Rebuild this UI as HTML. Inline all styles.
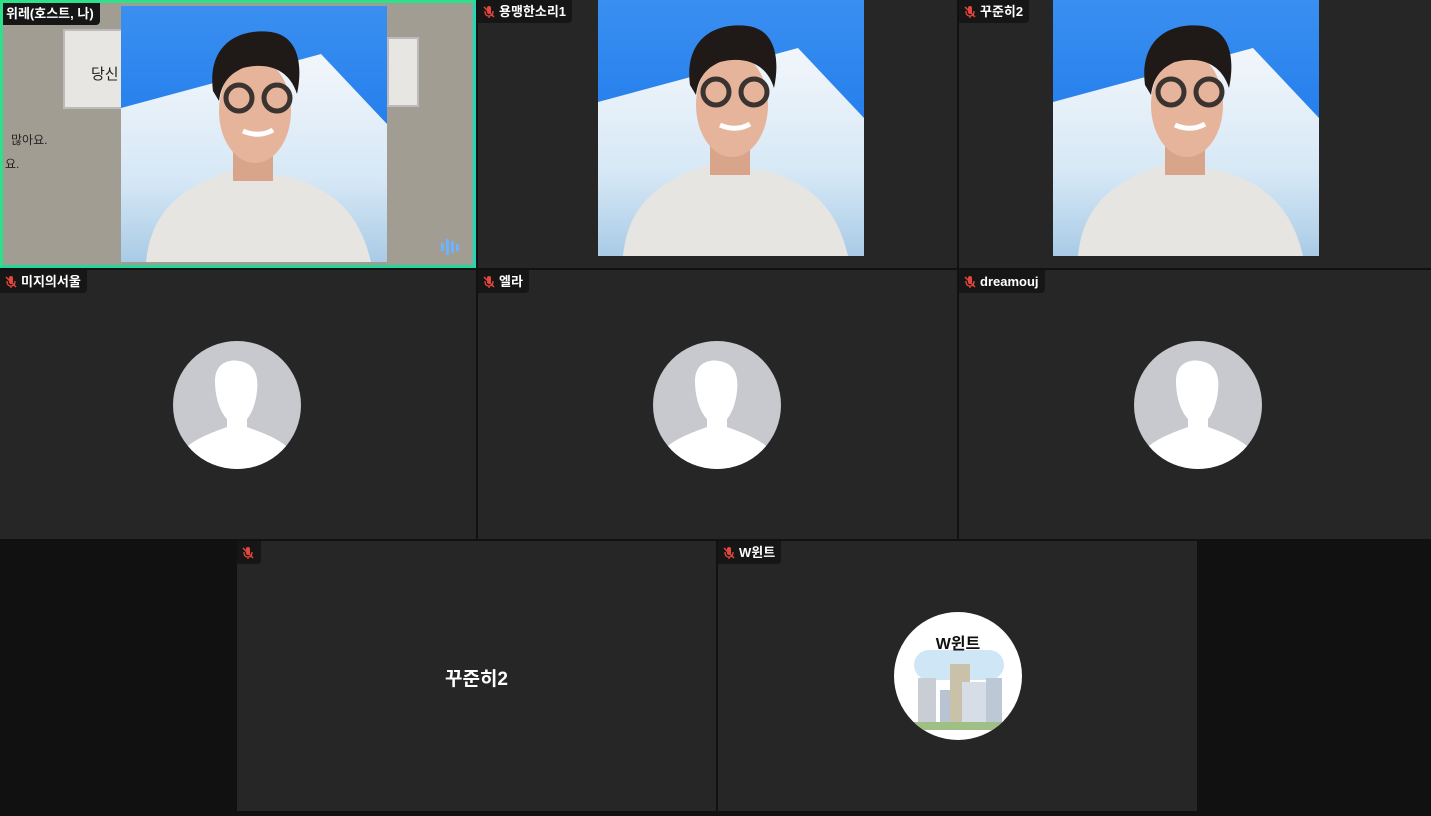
<!DOCTYPE html>
<html><head><meta charset="utf-8"><style>
*{margin:0;padding:0;box-sizing:border-box}
body{width:1431px;height:816px;background:#111;position:relative;overflow:hidden;font-family:"Liberation Sans","Noto Sans CJK KR",sans-serif}
.t{position:absolute;background:#262626;overflow:hidden}
.lbl{position:absolute;left:0;top:0;height:23px;background:#161616;color:#fff;font-size:13px;font-weight:bold;line-height:23px;padding:0 6px 0 4px;border-radius:0 0 4px 0;display:flex;align-items:center;gap:3px;z-index:3}
.mic{width:14px;height:14px}
.pic{position:absolute;width:266px;height:256px}
.av{position:absolute;width:128px;height:128px;border-radius:50%;background:#c7c9ce;overflow:hidden}
</style></head><body>
<svg width="0" height="0" style="position:absolute">
<defs>
<linearGradient id="bg" x1="0" y1="0" x2="0" y2="1"><stop offset="0" stop-color="#3a8ff0"/><stop offset="1" stop-color="#0d6de8"/></linearGradient>
<linearGradient id="wh" x1="0" y1="0" x2="0" y2="1"><stop offset="0" stop-color="#f2f6fb"/><stop offset="0.6" stop-color="#d6e8f6"/><stop offset="1" stop-color="#a9cbe6"/></linearGradient>
<symbol id="por" viewBox="0 0 266 256">
<rect width="266" height="256" fill="url(#bg)"/>
<polygon points="0,102 200,48 266,118 266,256 0,256" fill="url(#wh)"/>
<path d="M25,256 C30,205 60,182 108,165 L165,170 C210,182 238,205 250,256Z" fill="#e7e5e1"/>
<rect x="112" y="140" width="40" height="35" fill="#d9a58a"/>
<ellipse cx="134" cy="105" rx="36" ry="52" fill="#e6b49b"/>
<path d="M92,85 C86,38 118,22 150,26 C178,30 182,60 176,88 C168,62 145,56 122,62 C108,68 100,78 98,95Z" fill="#1f1a18"/>
<circle cx="118" cy="92" r="13" fill="none" stroke="#3a3330" stroke-width="5"/>
<circle cx="156" cy="92" r="13" fill="none" stroke="#3a3330" stroke-width="5"/>
<path d="M122,125 Q138,132 152,124" stroke="#fff" stroke-width="5" fill="none"/>
</symbol>
<symbol id="mic" viewBox="0 0 14 14"><rect x="5" y="1" width="4" height="8" rx="2" fill="#e3463c"/><path d="M3,6 Q3,11 7,11 Q11,11 11,6 M7,11 V13" stroke="#e3463c" stroke-width="1.3" fill="none"/><path d="M2,2 L12,12" stroke="#e3463c" stroke-width="1.5"/></symbol>
<symbol id="user" viewBox="0 0 128 128"><path d="M42,40 C42,22 56,18 66,20 C80,22 86,32 84,50 C83,62 78,74 74,78 L74,86 C90,92 108,98 118,110 A64,64 0 0 1 10,110 C20,98 38,92 54,86 L54,78 C48,72 42,58 42,40Z" fill="#fff"/></symbol>
</defs></svg>

<div class="t" style="left:0;top:0;width:476px;height:268px;background:#a29d92;border:3px solid #1fd8b8;border-top-color:#2ee08a;border-left-color:#2ee08a;border-bottom-color:#20d89a">
<div style="position:absolute;left:60px;top:26px;width:64px;height:80px;background:#e8e6e2;border:2px solid #bbb"></div>
<div style="position:absolute;left:384px;top:34px;width:32px;height:70px;background:#e8e6e2;border:2px solid #bbb"></div>
<div style="position:absolute;left:88px;top:60px;font-size:15px;color:#222">당신</div>
<div style="position:absolute;left:8px;top:128px;font-size:12px;color:#222">많아요.</div>
<div style="position:absolute;left:2px;top:152px;font-size:12px;color:#222">요.</div>
<svg class="pic" style="left:118px;top:3px"><use href="#por"/></svg>
<div style="position:absolute;left:438px;top:236px;display:flex;gap:2px;align-items:center"><i style="width:3px;height:8px;background:#6cb4ff"></i><i style="width:3px;height:16px;background:#6cb4ff"></i><i style="width:3px;height:12px;background:#6cb4ff"></i><i style="width:3px;height:7px;background:#6cb4ff"></i></div>
<div class="lbl" style="left:-1px;top:-1px">위레(호스트, 나)</div>
</div>
<div class="t" style="left:478px;top:0;width:479px;height:268px">
<svg class="pic" style="left:120px;top:0"><use href="#por"/></svg>
<div class="lbl"><svg class="mic"><use href="#mic"/></svg>용맹한소리1</div></div>
<div class="t" style="left:959px;top:0;width:472px;height:268px">
<svg class="pic" style="left:94px;top:0"><use href="#por"/></svg>
<div class="lbl"><svg class="mic"><use href="#mic"/></svg>꾸준히2</div></div>
<div class="t" style="left:0;top:270px;width:476px;height:269px"><div class="av" style="left:173px;top:71px"><svg width="128" height="128"><use href="#user"/></svg></div><div class="lbl"><svg class="mic"><use href="#mic"/></svg>미지의서울</div></div>
<div class="t" style="left:478px;top:270px;width:479px;height:269px"><div class="av" style="left:175px;top:71px"><svg width="128" height="128"><use href="#user"/></svg></div><div class="lbl"><svg class="mic"><use href="#mic"/></svg>엘라</div></div>
<div class="t" style="left:959px;top:270px;width:472px;height:269px"><div class="av" style="left:175px;top:71px"><svg width="128" height="128"><use href="#user"/></svg></div><div class="lbl"><svg class="mic"><use href="#mic"/></svg>dreamouj</div></div>
<div class="t" style="left:237px;top:541px;width:479px;height:270px"><div class="lbl"><svg class="mic"><use href="#mic"/></svg></div>
<div style="position:absolute;left:0;right:0;top:123px;text-align:center;color:#fff;font-size:19px;font-weight:bold">꾸준히2</div></div>
<div class="t" style="left:718px;top:541px;width:479px;height:270px"><div class="lbl"><svg class="mic"><use href="#mic"/></svg>W윈트</div>
<div style="position:absolute;left:176px;top:71px;width:128px;height:128px;border-radius:50%;background:#fff;overflow:hidden">
<div style="position:absolute;left:20px;top:38px;width:90px;height:30px;border-radius:15px;background:#cfe6f6"></div>
<div style="position:absolute;left:0;right:0;top:18px;text-align:center;font-size:16px;font-weight:bold;color:#111">W윈트</div>
<div style="position:absolute;left:24px;top:66px;width:18px;height:48px;background:#c9cdd4"></div>
<div style="position:absolute;left:46px;top:78px;width:10px;height:36px;background:#b8c4d2"></div>
<div style="position:absolute;left:56px;top:52px;width:20px;height:62px;background:#c9c2a8"></div>
<div style="position:absolute;left:68px;top:70px;width:24px;height:44px;background:#d6dde6"></div>
<div style="position:absolute;left:92px;top:66px;width:16px;height:48px;background:#bcc8d6"></div>
<div style="position:absolute;left:20px;top:110px;width:92px;height:8px;background:#9fbf86"></div>
</div></div>
</body></html>
